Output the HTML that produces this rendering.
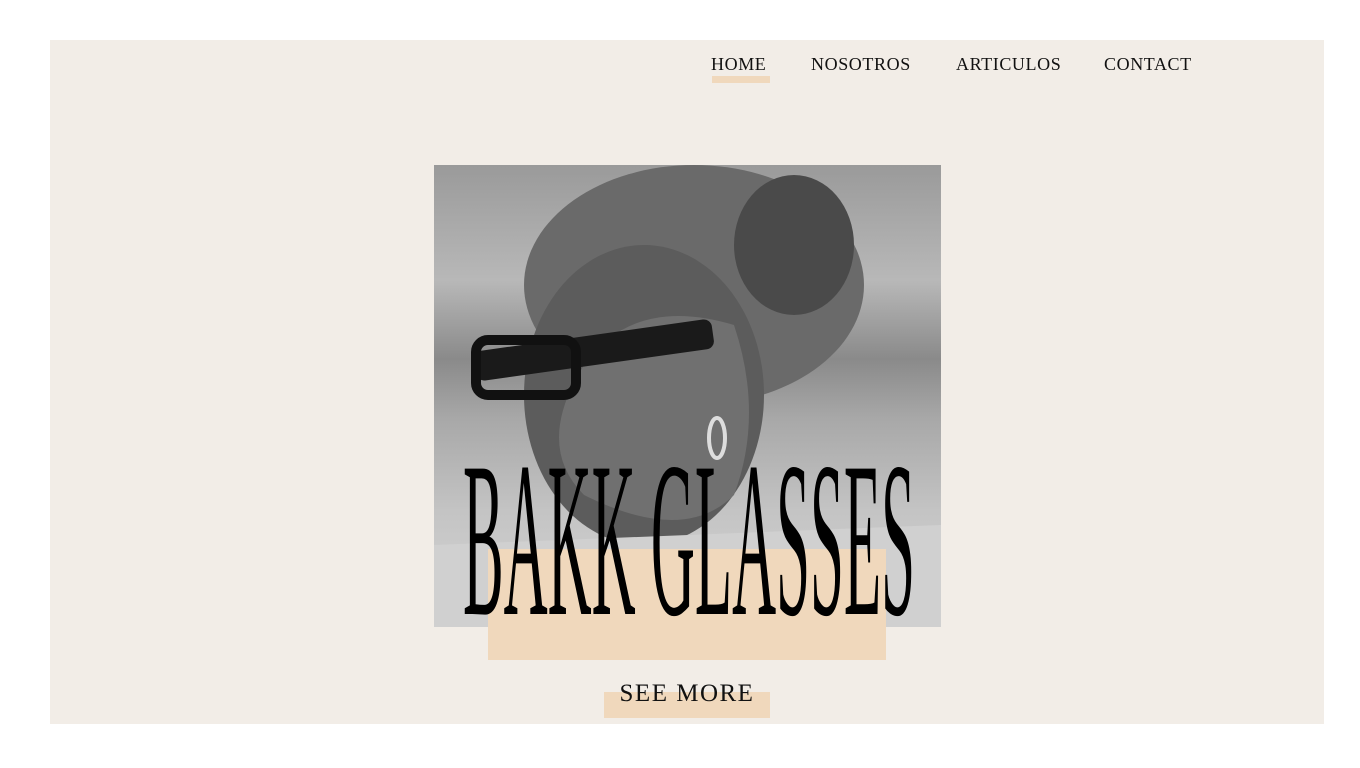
<!DOCTYPE html>
<html><head><meta charset="utf-8"><style>
body{margin:0;width:1360px;height:768px;background:#fff;position:relative;overflow:hidden;font-family:"Liberation Serif",serif}
.panel{position:absolute;left:50px;top:40px;width:1274px;height:684px;background:#f2ede7}
.nav{position:absolute;top:54px;font-size:18px;letter-spacing:0.6px;color:#111}
.ul{position:absolute;left:712px;top:76px;width:58px;height:7px;background:#f0d8bc}
.photo{position:absolute;left:434px;top:165px;width:507px;height:462px;overflow:hidden;
background:linear-gradient(180deg,#9a9a9a 0%,#b8b8b8 25%,#8a8a8a 42%,#a8a8a8 55%,#c4c4c4 75%,#d6d6d6 100%)}
.peach{position:absolute;left:488px;top:549px;width:398px;height:111px;background:#f0d8bc}
.btn{position:absolute;left:604px;top:692px;width:166px;height:26px;background:#f0d8bc}
.see{position:absolute;left:604px;top:680px;width:166px;text-align:center;font-size:25px;letter-spacing:1.5px;color:#111}
</style></head><body>
<div class="panel"></div>
<div class="nav" style="left:711px">HOME</div>
<div class="nav" style="left:811px">NOSOTROS</div>
<div class="nav" style="left:956px">ARTICULOS</div>
<div class="nav" style="left:1104px">CONTACT</div>
<div class="ul"></div>
<div class="photo">
<svg width="507" height="462" viewBox="0 0 507 462">
<ellipse cx="260" cy="120" rx="170" ry="120" fill="#6a6a6a"/>
<ellipse cx="360" cy="80" rx="60" ry="70" fill="#4a4a4a"/>
<ellipse cx="210" cy="230" rx="120" ry="150" fill="#5c5c5c"/>
<path d="M150 200 Q200 130 300 160 Q330 250 300 330 Q250 380 150 330 Q100 280 150 200Z" fill="#707070"/>
<rect x="40" y="170" width="240" height="30" rx="8" fill="#1a1a1a" transform="rotate(-8 160 185)"/>
<rect x="42" y="175" width="100" height="55" rx="12" fill="none" stroke="#111" stroke-width="10"/>
<ellipse cx="283" cy="273" rx="8" ry="20" fill="none" stroke="#ddd" stroke-width="4"/>
<path d="M0 380 L507 360 L507 462 L0 462Z" fill="#d0d0d0"/>
</svg></div>
<div class="peach"></div>
<svg style="position:absolute;left:0;top:0" width="1360" height="768">
<text x="463" y="614" font-family="Liberation Serif, serif" font-size="222" textLength="452" lengthAdjust="spacingAndGlyphs" fill="#000">BAKK GLASSES</text>
</svg>
<div class="btn"></div>
<div class="see">SEE MORE</div>
</body></html>
